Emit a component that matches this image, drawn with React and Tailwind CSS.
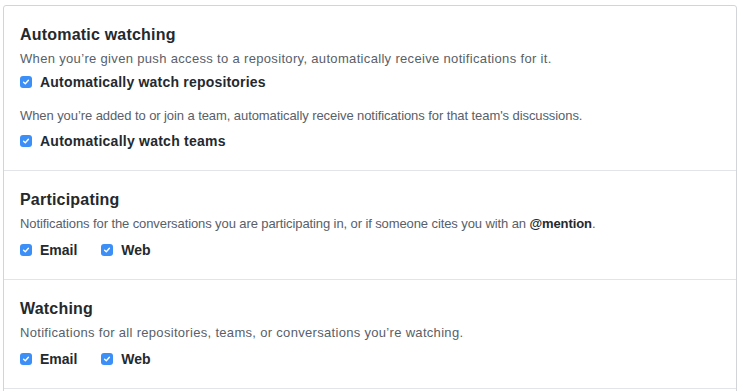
import React from "react";

function Check() {
  return (
    <span className="flex h-[12px] w-[12px] shrink-0 items-center justify-center rounded-[3px] bg-[#3b8ff6]">
      <svg width="8" height="8" viewBox="0 0 8 8" fill="none">
        <path d="M1.6 4.2 L3.3 5.8 L6.4 2.2" stroke="white" strokeWidth="1.4" strokeLinecap="round" strokeLinejoin="round" />
      </svg>
    </span>
  );
}

function Box({ label, className = "", labelClass = "" }) {
  return (
    <label className={"flex items-center h-[20px] " + className}>
      <Check />
      <span className={"ml-[8px] text-[14px] leading-[20px] font-bold text-[#24292e] " + labelClass}>{label}</span>
    </label>
  );
}

export default function App() {
  return (
    <div
      className="w-[746px] h-[391px] overflow-hidden bg-white pt-[5px] pl-[3px] pr-[9px]"
      style={{ fontFamily: '"Liberation Sans", Arial, sans-serif' }}
    >
      <div className="rounded-[3px] border border-[#d1d5da]">
        <div className="border-b border-[#e1e4e8] px-[16px] pt-[17px] pb-[19px]">
          <h3 className="text-[16px] leading-[24px] font-bold tracking-[0.2px] text-[#24292e]">Automatic watching</h3>
          <p className="mt-[2px] text-[13px] leading-[20px] tracking-[0.33px] text-[#586069]">
            When you’re given push access to a repository, automatically receive notifications for it.
          </p>
          <Box label="Automatically watch repositories" className="mt-[3px]" labelClass="tracking-[0.2px]" />
          <p className="mt-[14px] text-[13px] leading-[20px] tracking-[-0.08px] text-[#586069]">
            When you’re added to or join a team, automatically receive notifications for that team's discussions.
          </p>
          <Box label="Automatically watch teams" className="mt-[5px]" labelClass="tracking-[0.24px]" />
        </div>
        <div className="border-b border-[#e1e4e8] px-[16px] pt-[17px] pb-[19px]">
          <h3 className="text-[16px] leading-[24px] font-bold tracking-[0.2px] text-[#24292e]">Participating</h3>
          <p className="mt-[2px] text-[13px] leading-[20px] tracking-[-0.1px] text-[#586069]">
            Notifications for the conversations you are participating in, or if someone cites you with an{" "}
            <span className="font-bold text-[#24292e]">@mention</span>.
          </p>
          <div className="mt-[6px] flex">
            <Box label="Email" />
            <Box label="Web" className="ml-[24px]" />
          </div>
        </div>
        <div className="border-b border-[#e1e4e8] px-[16px] pt-[17px] pb-[19px]">
          <h3 className="text-[16px] leading-[24px] font-bold tracking-[0.2px] text-[#24292e]">Watching</h3>
          <p className="mt-[2px] text-[13px] leading-[20px] tracking-[0.31px] text-[#586069]">
            Notifications for all repositories, teams, or conversations you’re watching.
          </p>
          <div className="mt-[6px] flex">
            <Box label="Email" />
            <Box label="Web" className="ml-[24px]" />
          </div>
        </div>
        <div className="h-[40px]" />
      </div>
    </div>
  );
}
